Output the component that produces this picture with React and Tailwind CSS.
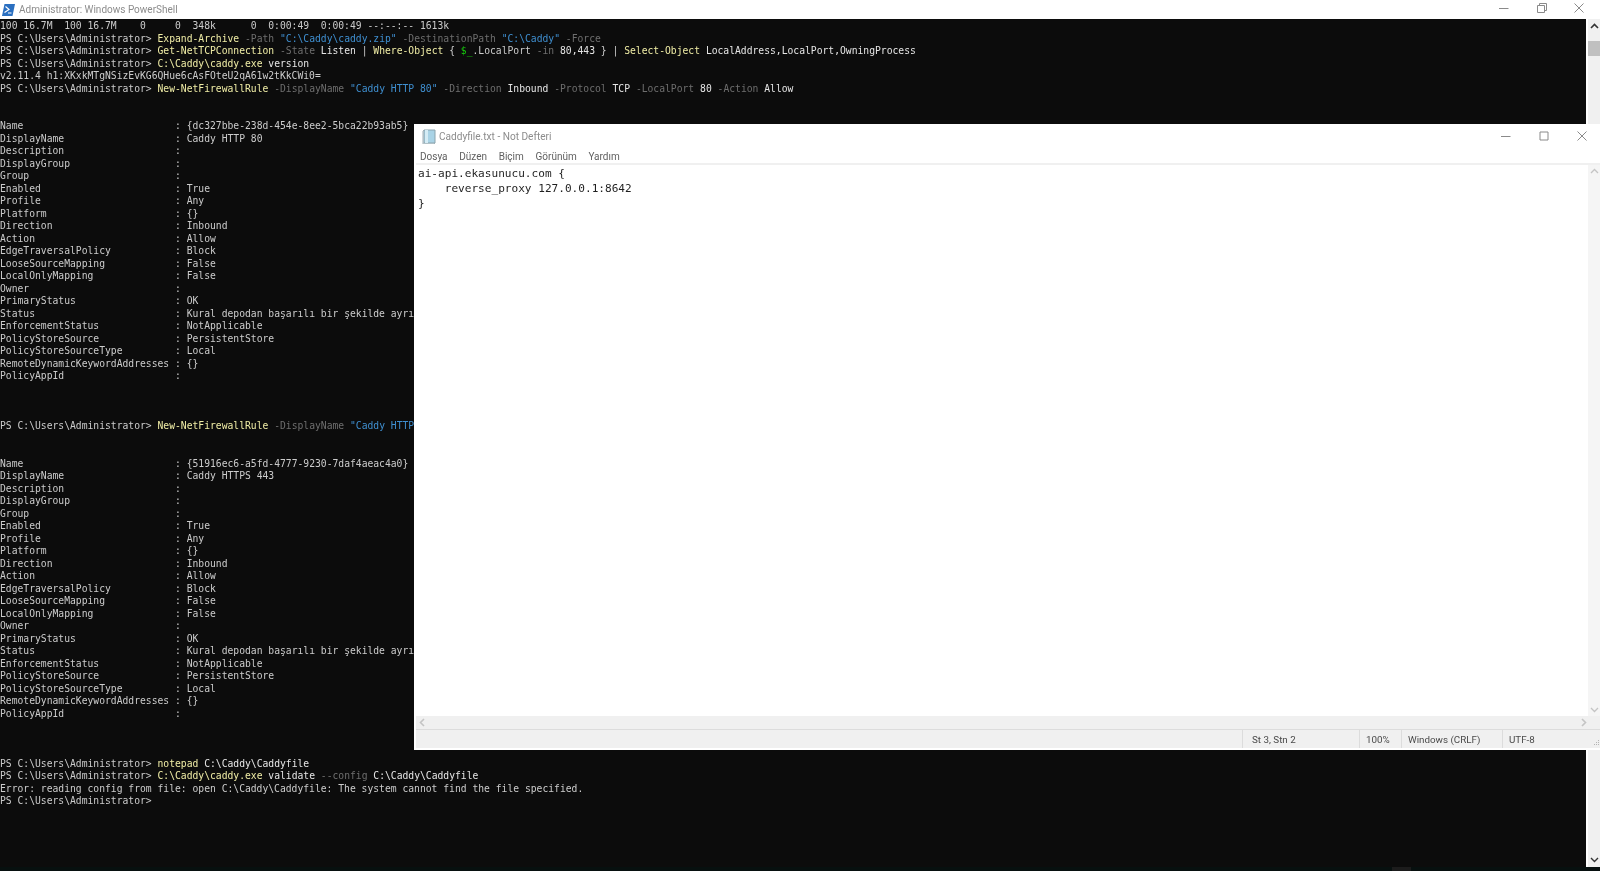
import React from "react";

const P = "PS C:\\Users\\Administrator> ";
const Y = ({ children }) => <span className="text-[#f0eda6]">{children}</span>;
const G = ({ children }) => <span className="text-[#6e6e6e]">{children}</span>;
const B = ({ children }) => <span className="text-[#3f8fd0]">{children}</span>;
const W = ({ children }) => <span className="text-[#e6e6e6]">{children}</span>;

const Row = ({ children }) => <div className="h-[12.5px] whitespace-pre">{children}</div>;

const rule = (guid, name) => [
  ["Name", guid],
  ["DisplayName", name],
  ["Description", ""],
  ["DisplayGroup", ""],
  ["Group", ""],
  ["Enabled", "True"],
  ["Profile", "Any"],
  ["Platform", "{}"],
  ["Direction", "Inbound"],
  ["Action", "Allow"],
  ["EdgeTraversalPolicy", "Block"],
  ["LooseSourceMapping", "False"],
  ["LocalOnlyMapping", "False"],
  ["Owner", ""],
  ["PrimaryStatus", "OK"],
  ["Status", "Kural depodan başarılı bir şekilde ayrıştırıldı. (65536)"],
  ["EnforcementStatus", "NotApplicable"],
  ["PolicyStoreSource", "PersistentStore"],
  ["PolicyStoreSourceType", "Local"],
  ["RemoteDynamicKeywordAddresses", "{}"],
  ["PolicyAppId", ""],
];

function RuleBlock({ guid, name }) {
  return rule(guid, name).map(([k, v]) => (
    <Row key={k}>
      {k.padEnd(30, " ")}: {v}
    </Row>
  ));
}

function Blank({ n }) {
  return Array.from({ length: n }, (_, i) => <Row key={i}> </Row>);
}

function Console() {
  return (
    <div className="flex-1 min-w-0 bg-[#0c0c0c] text-[#cccccc] overflow-hidden pt-px font-['DejaVu_Sans_Mono','Liberation_Mono',monospace] text-[9.7px] leading-[12.5px]">
      <Row>100 16.7M  100 16.7M    0     0  348k      0  0:00:49  0:00:49 --:--:-- 1613k</Row>
      <Row>
        {P}<Y>Expand-Archive</Y> <G>-Path</G> <B>"C:\Caddy\caddy.zip"</B> <G>-DestinationPath</G> <B>"C:\Caddy"</B> <G>-Force</G>
      </Row>
      <Row>
        {P}<Y>Get-NetTCPConnection</Y> <G>-State</G> <W>Listen</W> | <Y>Where-Object</Y> {"{ "}<span className="text-[#16c60c]">$_</span>.LocalPort <G>-in</G> <W>80,443</W> {"} | "}<Y>Select-Object</Y> <W>LocalAddress,LocalPort,OwningProcess</W>
      </Row>
      <Row>
        {P}<Y>C:\Caddy\caddy.exe</Y> <W>version</W>
      </Row>
      <Row>v2.11.4 h1:XKxkMTgNSizEvKG6QHue6cAsFOteU2qA61w2tKkCWi0=</Row>
      <Row>
        {P}<Y>New-NetFirewallRule</Y> <G>-DisplayName</G> <B>"Caddy HTTP 80"</B> <G>-Direction</G> <W>Inbound</W> <G>-Protocol</G> <W>TCP</W> <G>-LocalPort</G> <W>80</W> <G>-Action</G> <W>Allow</W>
      </Row>
      <Blank n={2} />
      <RuleBlock guid="{dc327bbe-238d-454e-8ee2-5bca22b93ab5}" name="Caddy HTTP 80" />
      <Blank n={3} />
      <Row>
        {P}<Y>New-NetFirewallRule</Y> <G>-DisplayName</G> <B>"Caddy HTTPS 443"</B> <G>-Direction</G> <W>Inbound</W> <G>-Protocol</G> <W>TCP</W> <G>-LocalPort</G> <W>443</W> <G>-Action</G> <W>Allow</W>
      </Row>
      <Blank n={2} />
      <RuleBlock guid="{51916ec6-a5fd-4777-9230-7daf4aeac4a0}" name="Caddy HTTPS 443" />
      <Blank n={3} />
      <Row>
        {P}<Y>notepad</Y> <W>C:\Caddy\Caddyfile</W>
      </Row>
      <Row>
        {P}<Y>C:\Caddy\caddy.exe</Y> <W>validate</W> <G>--config</G> <W>C:\Caddy\Caddyfile</W>
      </Row>
      <Row>Error: reading config from file: open C:\Caddy\Caddyfile: The system cannot find the file specified.</Row>
      <Row>PS C:\Users\Administrator&gt;</Row>
    </div>
  );
}

function WinButtons({ restore, color = "#8a8a8a" }) {
  return (
    <div className="flex items-center">
      <svg width="10" height="10" viewBox="0 0 10 10" className="mr-[28px]"><path d="M0 5.5h9.5" stroke={color} /></svg>
      {restore ? (
        <svg width="10" height="10" viewBox="0 0 10 10" className="mr-[27px]"><path d="M.5 2.5h7v7h-7zM2.5 2.5v-2h7v7h-2" fill="none" stroke={color} /></svg>
      ) : (
        <svg width="10" height="10" viewBox="0 0 10 10" className="mr-[28px]"><path d="M1 1h8v8H1z" fill="none" stroke={color} /></svg>
      )}
      <svg width="10" height="10" viewBox="0 0 10 10"><path d="M.5.5l9 9M9.5.5l-9 9" stroke={color} /></svg>
    </div>
  );
}

function Chevron({ dir, color = "#a0a0a0", w = 1.3 }) {
  const d = { up: "M1 6l3.5-3.5L8 6", down: "M1 3l3.5 3.5L8 3", left: "M6 1L2.5 4.5 6 8", right: "M3 1l3.5 3.5L3 8" }[dir];
  return (
    <svg width="9" height="9" viewBox="0 0 9 9"><path d={d} fill="none" stroke={color} strokeWidth={w} /></svg>
  );
}

function Notepad() {
  return (
    <div className="absolute left-[414px] top-[124px] w-[1186px] h-[626px] bg-white flex flex-col font-['Roboto','Noto_Sans',sans-serif] border-l-2 border-b-2 border-white">
      <div className="h-[22px] shrink-0 flex items-center justify-between pl-[6px] pr-[13px] mt-px">
        <div className="flex items-center gap-[3px]">
          <svg width="14" height="16" viewBox="0 0 14 16">
            <path d="M2 2h11v13H2z" fill="#a9d3e6" stroke="#8aa3ad" />
            <path d="M2 2L1 3v13h11l1-1" fill="none" stroke="#9fb0b8" />
            <path d="M3 2h3v13H3z" fill="#d5ecf5" />
          </svg>
          <span className="text-[10.1px] leading-[16px] pt-[2px] text-[#8c8c8c]">Caddyfile.txt - Not Defteri</span>
        </div>
        <WinButtons />
      </div>
      <div className="h-[18px] shrink-0 flex items-center gap-[11.7px] pl-[4px] pt-[3px] text-[10px] text-[#5f5f5f] border-b-2 border-[#f0f0f0]">
        <span>Dosya</span>
        <span>Düzen</span>
        <span>Biçim</span>
        <span>Görünüm</span>
        <span>Yardım</span>
      </div>
      <div className="flex-1 min-h-0 flex">
        <pre className="flex-1 pl-[2px] pt-px font-['DejaVu_Sans_Mono','Liberation_Mono',monospace] text-[11.1px] leading-[15px] text-[#1f1f1f]">{"ai-api.ekasunucu.com {\n    reverse_proxy 127.0.0.1:8642\n}"}</pre>
        <div className="w-[12px] bg-[#f5f5f5] flex flex-col items-center justify-between py-[2px]">
          <Chevron dir="up" color="#c4c4c4" />
          <Chevron dir="down" color="#c4c4c4" />
        </div>
      </div>
      <div className="h-[13px] shrink-0 bg-[#f0f0f0] flex items-center justify-between pl-[2px] pr-[12px]">
        <Chevron dir="left" color="#c4c4c4" w={1.6} />
        <Chevron dir="right" color="#c4c4c4" w={1.6} />
      </div>
      <div className="h-[19px] shrink-0 bg-[#f0f0f0] border-t border-[#dcdcdc] flex items-center text-[9.8px] text-[#4a4a4a]">
        <div className="w-[826px]" />
        <div className="w-[117px] h-full pl-[9px] pt-[2px] border-l border-[#dcdcdc] flex items-center">St 3, Stn 2</div>
        <div className="w-[42px] h-full pl-[6px] pt-[2px] border-l border-[#dcdcdc] flex items-center">100%</div>
        <div className="w-[101px] h-full pl-[6px] pt-[2px] border-l border-[#dcdcdc] flex items-center">Windows (CRLF)</div>
        <div className="flex-1 h-full pl-[6px] pt-[2px] border-l border-[#dcdcdc] flex items-center justify-between">
          <span>UTF-8</span>
          <svg width="8" height="8" viewBox="0 0 8 8" className="self-end mb-[1px]">
            <path d="M6 1h1v1H6zM4 3h1v1H4zM6 3h1v1H6zM2 5h1v1H2zM4 5h1v1H4zM6 5h1v1H6z" fill="#b5b5b5" />
          </svg>
        </div>
      </div>
    </div>
  );
}

export default function App() {
  return (
    <div className="relative w-[1600px] h-[871px] overflow-hidden bg-white flex flex-col blur-[0.35px]">
      <div className="h-[19px] shrink-0 flex justify-between pl-[2px] pr-[16px]">
        <div className="flex items-center gap-[4px]">
          <svg width="13" height="12" viewBox="0 0 13 12">
            <path d="M2.5 0H13l-2.5 12H0z" fill="#2a6fc0" />
            <path d="M3.5 2.5L7 5.5 2.5 8.5M6 9h3.5" fill="none" stroke="#fff" strokeWidth="1.2" />
          </svg>
          <span className="font-['Roboto','Noto_Sans',sans-serif] text-[10px] text-[#8c8c8c]">Administrator: Windows PowerShell</span>
        </div>
        <div className="pt-[3px]">
          <WinButtons restore />
        </div>
      </div>
      <div className="flex flex-1 min-h-0">
        <Console />
        <div className="w-[14px] shrink-0 bg-[#f0f0f0] flex flex-col items-center justify-between pt-[3px] pb-[3px] border-l-2 border-white">
          <div className="flex flex-col items-center w-full">
            <Chevron dir="up" color="#333333" w={1.6} />
            <div className="w-full h-[15px] mt-[10px] bg-[#c0c0c0]" />
          </div>
          <Chevron dir="down" color="#333333" w={1.4} />
        </div>
      </div>
      <div className="h-[4px] shrink-0 bg-[#07100f] pl-[1392px]">
        <div className="w-[19px] h-full bg-[#1c1c1c]" />
      </div>
      <Notepad />
    </div>
  );
}
